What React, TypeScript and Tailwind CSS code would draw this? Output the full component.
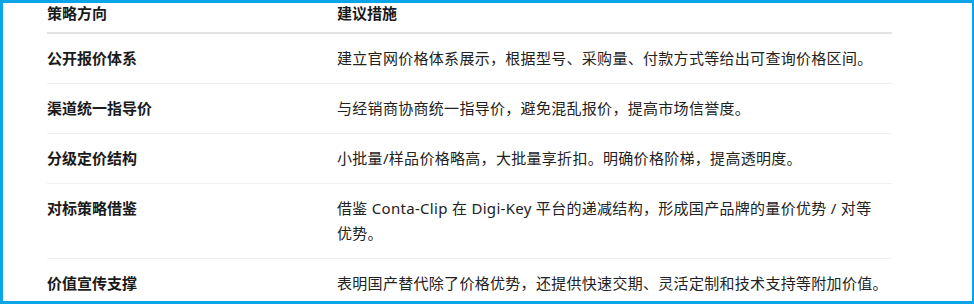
import React from "react";

const rows: { k: string; v: string; pr: string }[] = [
  { k: "公开报价体系", v: "建立官网价格体系展示，根据型号、采购量、付款方式等给出可查询价格区间。", pr: "pr-[4px]" },
  { k: "渠道统一指导价", v: "与经销商协商统一指导价，避免混乱报价，提高市场信誉度。", pr: "pr-[4px]" },
  { k: "分级定价结构", v: "小批量/样品价格略高，大批量享折扣。明确价格阶梯，提高透明度。", pr: "pr-[4px]" },
  { k: "对标策略借鉴", v: "借鉴 Conta-Clip 在 Digi-Key 平台的递减结构，形成国产品牌的量价优势 / 对等优势。", pr: "pr-[15px]" },
  { k: "价值宣传支撑", v: "表明国产替代除了价格优势，还提供快速交期、灵活定制和技术支持等附加价值。", pr: "pr-[4px]" },
];

export default function App() {
  return (
    <div
      className="w-[974px] h-[304px] overflow-hidden bg-white border-[3px] border-r-2 border-[#0aa5e8]"
      style={{ fontFamily: '"Noto Sans", "Noto Sans CJK SC", sans-serif' }}
    >
      <div className="ml-[44px] w-[845px] text-[15px] text-[#222]">
        <div className="flex border-b-2 border-[#e3e3e3] pb-[9px]">
          <div className="w-[290px] shrink-0 font-bold leading-[20px] text-[#1a1a1a]">策略方向</div>
          <div className="flex-1 font-bold leading-[20px] text-[#1a1a1a]">建议措施</div>
        </div>
        {rows.map((r) => (
          <div key={r.k} className="flex border-b border-[#f0f0f0] py-[12px]">
            <div className="w-[290px] shrink-0 font-bold leading-[25px] text-[#1a1a1a]">{r.k}</div>
            <div className={`flex-1 leading-[25px] tracking-[0.3px] ${r.pr}`}>{r.v}</div>
          </div>
        ))}
      </div>
    </div>
  );
}
